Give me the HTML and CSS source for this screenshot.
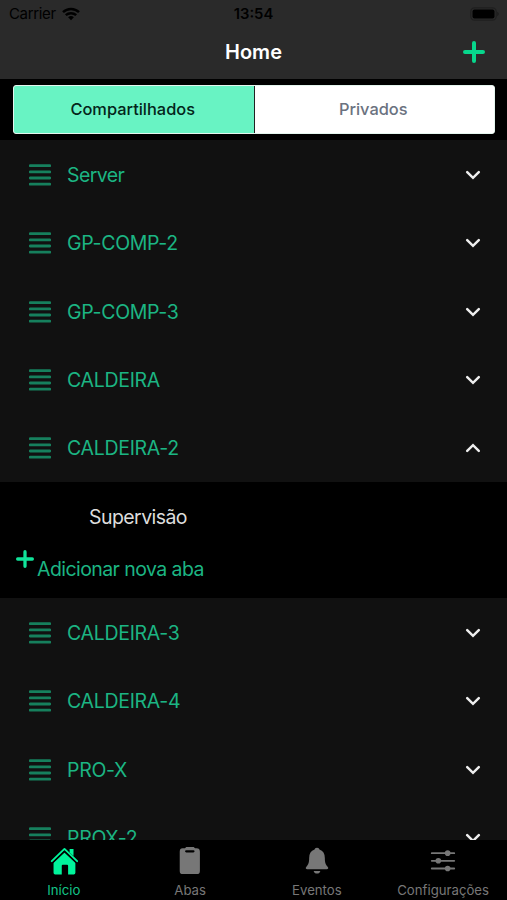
FILE: index.html
```
<!DOCTYPE html>
<html lang="pt-BR">
<head>
<meta charset="UTF-8">
<meta name="viewport" content="width=device-width, initial-scale=1.0">
<title>Home</title>
<link rel="stylesheet" href="styles.css">
</head>
<body>

<svg class="symbols">
    <symbol id="bars" viewBox="0 0 22 22">
        <path d="M1.2 1.7h19.6M1.2 7.8h19.6M1.2 14h19.6M1.2 20.2h19.6" stroke="currentColor" stroke-width="2.8" stroke-linecap="round"/>
    </symbol>
    <symbol id="down" viewBox="0 0 16 10">
        <path d="M2.2 2.200L8 7.800l5.800-5.600" fill="none" stroke="currentColor" stroke-width="2.500" stroke-linecap="round"/>
    </symbol>
    <symbol id="plus" viewBox="0 0 22 22">
        <path d="M11 2v18M2 11h18" stroke="currentColor" stroke-width="4" stroke-linecap="round"/>
    </symbol>
</svg>

<div class="phone">
    <header>
        <div class="status">
            <div class="carrier">
                <span>Carrier</span>
                <svg width="18" height="14" viewBox="0 0 18 14" fill="none" stroke="#000" stroke-width="2.5">
                    <path d="M1 5.1a11.6 11.6 0 0 1 16 0M3.8 8.2a7.6 7.6 0 0 1 10.4 0"/>
                    <path d="M9 13.3L6.1 10.3a4.3 4.3 0 0 1 5.8 0z" fill="#000" stroke="none"/>
                </svg>
            </div>
            <b class="time">13:54</b>
            <svg class="battery" width="30" height="14" viewBox="0 0 30 14">
                <rect x="0.8" y="0.8" width="25.4" height="12.4" rx="3.6" fill="none" stroke="#1f1f1f" stroke-width="1.2"/>
                <rect x="2.5" y="2.5" width="22" height="9" rx="2" fill="#000"/>
                <path d="M27.5 4.8q2 2.2 0 4.4z" fill="#141414"/>
            </svg>
        </div>
        <div class="title">
            <h1>Home</h1>
            <svg class="add"><use href="#plus"/></svg>
        </div>
    </header>

    <div class="segments">
        <button class="segment active">Compartilhados</button>
        <button class="segment">Privados</button>
    </div>

    <main>
        <div class="row"><svg class="bars"><use href="#bars"/></svg><span class="mixed">Server</span><svg class="arrow"><use href="#down"/></svg></div>
        <div class="row"><svg class="bars"><use href="#bars"/></svg><span>GP-COMP-2</span><svg class="arrow"><use href="#down"/></svg></div>
        <div class="row"><svg class="bars"><use href="#bars"/></svg><span>GP-COMP-3</span><svg class="arrow"><use href="#down"/></svg></div>
        <div class="row"><svg class="bars"><use href="#bars"/></svg><span>CALDEIRA</span><svg class="arrow"><use href="#down"/></svg></div>
        <div class="row"><svg class="bars"><use href="#bars"/></svg><span>CALDEIRA-2</span><svg class="arrow up"><use href="#down"/></svg></div>
        <div class="panel">
            <div class="tab-name">Supervisão</div>
            <div class="new-tab"><svg class="small-plus"><use href="#plus"/></svg><span>Adicionar nova aba</span></div>
        </div>
        <div class="row"><svg class="bars"><use href="#bars"/></svg><span>CALDEIRA-3</span><svg class="arrow"><use href="#down"/></svg></div>
        <div class="row"><svg class="bars"><use href="#bars"/></svg><span>CALDEIRA-4</span><svg class="arrow"><use href="#down"/></svg></div>
        <div class="row"><svg class="bars"><use href="#bars"/></svg><span>PRO-X</span><svg class="arrow"><use href="#down"/></svg></div>
        <div class="row"><svg class="bars"><use href="#bars"/></svg><span>PROX-2</span><svg class="arrow"><use href="#down"/></svg></div>
    </main>

    <nav>
        <a class="item current">
            <svg viewBox="0 0 30 30" fill="currentColor">
                <path d="M15.500 6L27.200 16.500V27.600q0 1.800-1.800 1.800h-6v-9.400q0-1-1-1h-4.800q-1 0-1 1v9.400H5.600q-1.800 0-1.800-1.800V16.500z"/>
                <path d="M21 2.200h4.200v7.500L21 5.800z"/>
                <path d="M1.900 15.200L15.500 2l13.600 13.200" fill="none" stroke="currentColor" stroke-width="2" stroke-linecap="round" stroke-linejoin="round"/>
                <path d="M3 17L15.500 4.900 28 17" fill="none" stroke="#000" stroke-width="1.200"/>
            </svg>
            <span>Início</span>
        </a>
        <a class="item">
            <svg viewBox="0 0 30 30" fill="currentColor">
                <path fill-rule="evenodd" d="M7 1.400h2.600L11 0h8l1.400 1.400H22q3.600 0 3.600 3.600v20.600q0 3.400-3.400 3.400H7.400Q4 29 4 25.600V5q0-3.600 3-3.600zM11 3.400q-1.300 0-1.300 1.200t1.300 1.200h7.600q1.300 0 1.300-1.200t-1.300-1.200z"/>
            </svg>
            <span>Abas</span>
        </a>
        <a class="item">
            <svg viewBox="0 0 30 30" fill="currentColor">
                <path d="M15 .7c-1.700 0-2.400 1-2.600 2C8.500 4 6.600 7.200 6.600 11.800c0 5-.8 7-3 9.300-1.300 1.500-.5 2.700 1 2.700h20.800c1.500 0 2.300-1.200 1-2.700-2.200-2.300-3-4.300-3-9.300 0-4.600-1.900-7.800-5.800-9.100-.2-1-.9-2-2.600-2zM11.400 25.600h7.200c-.6 1.900-1.800 2.700-3.600 2.700s-3-.8-3.600-2.700z"/>
            </svg>
            <span>Eventos</span>
        </a>
        <a class="item settings">
            <svg viewBox="0 0 30 30" fill="currentColor">
                <path d="M3 6.600h24M3 14.800h24M3 23h24" stroke="currentColor" stroke-width="2" stroke-linecap="round"/>
                <circle cx="20" cy="6.600" r="3"/>
                <circle cx="10" cy="14.800" r="3"/>
                <circle cx="20" cy="23" r="3"/>
            </svg>
            <span>Configurações</span>
        </a>
    </nav>
</div>

</body>
</html>
```

FILE: styles.css
```
* {
    box-sizing: border-box;
}
body {
    margin: 0;
    background-color: #000;
    font-family: Inter, "Liberation Sans", sans-serif;
}
.symbols {
    display: none;
}
.phone {
    display: flex;
    flex-direction: column;
    height: 900px;
    overflow: hidden;
}
header {
    height: 79px;
    flex-shrink: 0;
    background-color: #2a2a2a;
}
.status {
    display: grid;
    grid-template-columns: 1fr auto 1fr;
    align-items: center;
    height: 27px;
    padding: 0 7px 0 9px;
    font-size: 15px;
    color: #000;
}
.carrier {
    display: flex;
    align-items: center;
    gap: 6px;
    letter-spacing: -0.35px;
}
.time {
    margin-right: 2px;
    font-size: 14.8px;
    font-weight: 600;
}
.battery {
    justify-self: end;
}
.title {
    display: grid;
    grid-template-columns: 1fr auto 1fr;
    align-items: center;
    height: 50px;
    padding: 0 22px;
}
h1 {
    grid-column: 2;
    margin: 0;
    font-size: 20px;
    font-weight: 600;
    color: #fff;
}
.add {
    justify-self: end;
    width: 22px;
    height: 22px;
    color: #07d68c;
}
.segments {
    display: flex;
    flex-shrink: 0;
    height: 49px;
    margin: 6px 12px 6px 13px;
    border: 1px solid #e4f5ee;
    border-radius: 3px;
    overflow: hidden;
    background-color: #fff;
}
.segment {
    flex: 1;
    padding: 0 2px 1px 0;
    border: none;
    background-color: #fff;
    font-family: inherit;
    font-size: 16.4px;
    font-weight: 500;
    color: #6b7280;
}
.segment.active {
    background-color: #68f3c3;
    border-right: 1px solid #222;
    color: #04251a;
}
main {
    flex: 1;
    min-height: 0;
    overflow: hidden;
    background-color: #111;
}
.row {
    display: flex;
    align-items: center;
    height: 68.45px;
    padding: 1px 26px 0 29px;
    font-size: 19.5px;
    letter-spacing: -0.3px;
    color: #1cb583;
}
.row span {
    flex: 1;
    margin-left: 16px;
}
.row .mixed {
    letter-spacing: -0.6px;
}
.bars {
    width: 22px;
    height: 22px;
    color: #16805d;
}
.arrow {
    width: 16px;
    height: 10px;
    color: #eee;
}
.arrow.up {
    transform: rotate(180deg);
}
.panel {
    height: 116px;
    padding-top: 23px;
    background-color: #000;
    font-size: 19.5px;
    line-height: 24px;
    letter-spacing: -0.57px;
}
.tab-name {
    padding-left: 89px;
    color: #ddd;
}
.new-tab {
    display: flex;
    align-items: flex-start;
    margin-top: 21px;
    padding-left: 16px;
    color: #1cb583;
}
.small-plus {
    width: 18px;
    height: 18px;
    margin-right: 3px;
    color: #10e49a;
}
.new-tab span {
    margin-top: 7px;
}
nav {
    display: grid;
    grid-template-columns: repeat(4, 1fr);
    flex-shrink: 0;
    height: 60px;
    background-color: #000;
}
.item {
    display: flex;
    flex-direction: column;
    align-items: center;
    padding-top: 7px;
    font-size: 13.2px;
    color: #777;
}
.item svg {
    width: 28px;
    height: 28px;
}
.item span {
    margin-top: 7px;
    line-height: 16px;
}
.item.settings {
    padding-right: 1px;
}
.item.current {
    padding-left: 1px;
    color: #00f49b;
}
.item.current span {
    color: #13c488;
}
```
